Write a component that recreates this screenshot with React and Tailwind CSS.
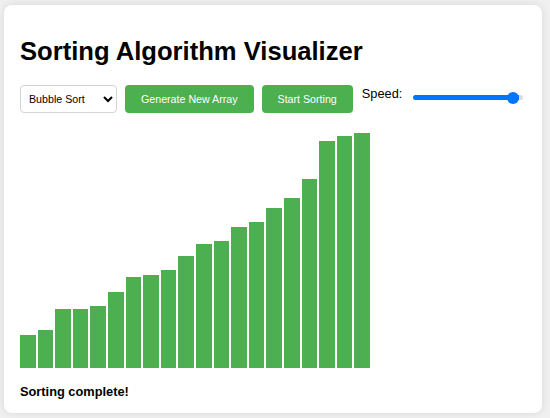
import { useState } from 'react';

const heights = [33, 38, 59, 59, 62, 76, 91, 93, 98, 112, 124, 127, 141, 146, 160, 170, 189, 227, 232, 235];

export default function App() {
  const [algo, setAlgo] = useState('bubble');
  const [speed, setSpeed] = useState(96);
  const pct = ((speed - 1) / 99) * 100;

  return (
    <div className="w-[550px] h-[418px] bg-[#f0f0f0] pl-[4px] pt-[5px] font-['Liberation_Sans',Arial,sans-serif] text-black">
      <div className="w-[538px] h-[408px] bg-white rounded-[8px] shadow-[0_0_8px_rgba(0,0,0,0.1)] px-[16px] pt-[16px]">
        <h1 className="mt-[16px] text-[25.6px] leading-[29px] font-bold">Sorting Algorithm Visualizer</h1>

        {/* controls */}
        <div className="mt-[19px] flex items-start">
          <select
            value={algo}
            onChange={(e) => setAlgo(e.target.value)}
            className="w-[97px] h-[28px] border border-[#d4d4d4] rounded-[4px] pl-[4px] text-[10.67px] bg-white"
          >
            <option value="bubble">Bubble Sort</option>
            <option value="selection">Selection Sort</option>
            <option value="insertion">Insertion Sort</option>
          </select>
          <button className="ml-[8px] h-[28px] px-[16px] bg-[#4caf50] text-white text-[10.67px] rounded-[4px]">
            Generate New Array
          </button>
          <button className="ml-[8px] h-[28px] px-[16px] bg-[#4caf50] text-white text-[10.67px] rounded-[4px]">
            Start Sorting
          </button>
          <label className="ml-[9px] text-[12.8px] leading-[15px] mt-[1px]">Speed:</label>
          <input
            type="range"
            min="1"
            max="100"
            value={speed}
            onChange={(e) => setSpeed(Number(e.target.value))}
            style={{ background: `linear-gradient(to right, #0075ff ${pct}%, #dcdcdc ${pct}%)` }}
            className="ml-[11px] mt-[10px] w-[110px] h-[5px] rounded-full appearance-none [&::-webkit-slider-thumb]:appearance-none [&::-webkit-slider-thumb]:w-[12px] [&::-webkit-slider-thumb]:h-[12px] [&::-webkit-slider-thumb]:rounded-full [&::-webkit-slider-thumb]:bg-[#0075ff]"
          />
        </div>

        {/* bars */}
        <div className="mt-[15px] w-[350px] h-[240px] flex items-end gap-[2px]">
          {heights.map((h, i) => (
            <div key={i} className="flex-1 bg-[#4caf50]" style={{ height: h }} />
          ))}
        </div>

        <p className="mt-[16px] text-[12.8px] leading-[15px] font-bold">Sorting complete!</p>
      </div>
    </div>
  );
}
